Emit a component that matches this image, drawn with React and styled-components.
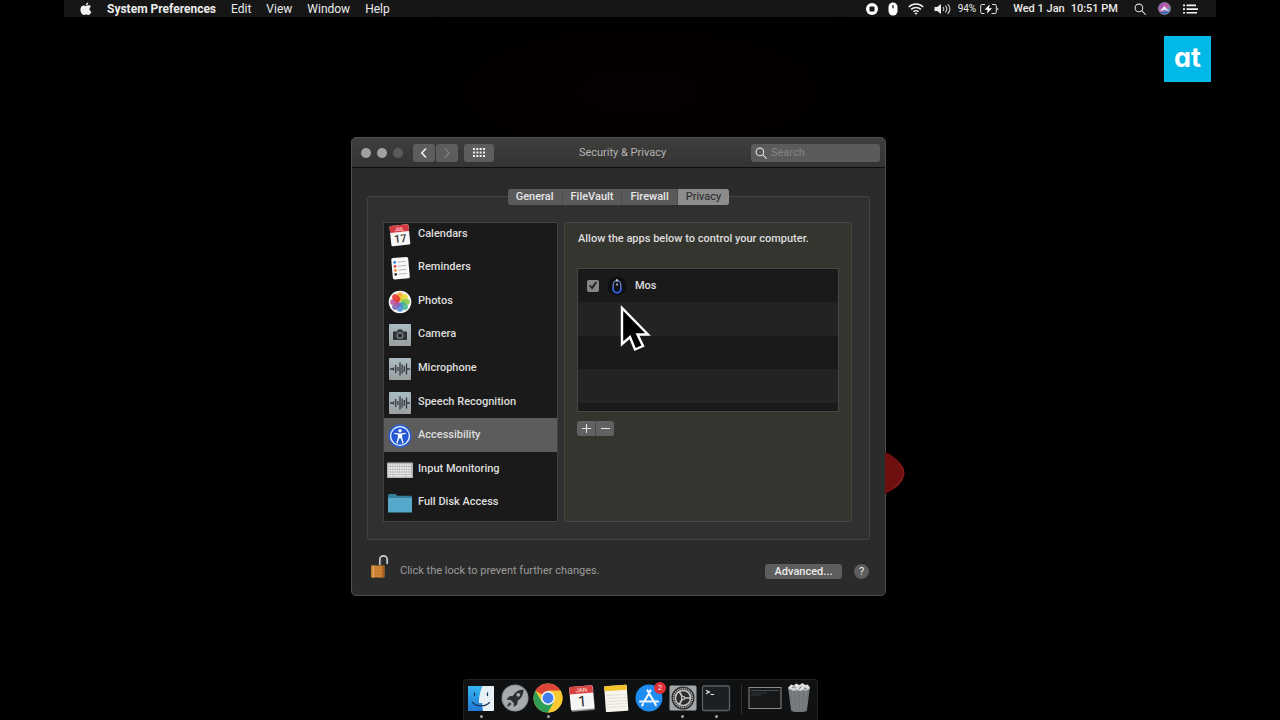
import * as React from "react";
import styled, { createGlobalStyle } from "styled-components";

const GlobalStyle = createGlobalStyle`
  * {
    box-sizing: border-box;
  }

  body {
    margin: 0;
    background: #000;
    font-family: Roboto, "Liberation Sans", sans-serif;
    font-size: 11px;
    line-height: 16px;
    color: #dedede;
  }

  button, input {
    font: inherit;
    color: inherit;
    padding: 0;
    border: none;
    margin: 0;
  }

  ul {
    margin: 0;
    padding: 0;
    list-style-type: none;
  }

  svg {
    display: block;
    flex: none;
  }
`;

/* ---------- menu bar icons ---------- */

const AppleIcon = () => (
  <svg width="12" height="14" viewBox="0 0 12 14" fill="#f2f2f2">
    <path d="M8.3.4c.1 1.5-1.1 2.8-2.4 2.8C5.700 1.800 6.900.6 8.300.4z" />
    <path d="M6 4c.6 0 1.300-.7 2.500-.7 1 0 2 .5 2.500 1.300-2.200 1.300-1.800 4.300.4 5.200-.6 1.700-1.700 3.300-2.900 3.300-.9 0-1.300-.5-2.400-.5s-1.500.5-2.300.5C2.200 13.100.4 10.300.4 7.600c0-2.700 1.600-4.200 3.300-4.200C4.800 3.400 5.500 4 6 4z" />
  </svg>
);

const RecordIcon = () => (
  <svg width="12" height="14" viewBox="0 0 12 14">
    <circle cx="6" cy="7" r="6" fill="#fff" />
    <rect x="3.500" y="4.500" width="5" height="5" rx="1" fill="#161616" />
  </svg>
);

const MouseStatusIcon = () => (
  <svg width="10" height="14" viewBox="0 0 10 14">
    <rect x="0.500" y="0.500" width="9" height="13" rx="4.500" fill="#fff" />
    <rect x="4.300" y="3" width="1.400" height="3.500" rx="0.700" fill="#222" />
  </svg>
);

const WifiIcon = () => (
  <svg width="16" height="14" viewBox="0 0 16 14" fill="none" stroke="#eee" strokeWidth="1.500">
    <path d="M.8 5a10.200 10.200 0 0 1 14.400 0M3.100 7.400a7 7 0 0 1 9.800 0M5.400 9.700a3.700 3.700 0 0 1 5.200 0" />
    <path d="M8 12.800 6.400 11.200a2.300 2.300 0 0 1 3.200 0z" fill="#eee" stroke="none" />
  </svg>
);

const SpeakerIcon = () => (
  <svg width="18" height="14" viewBox="0 0 18 14" fill="none" stroke="#cfcfcf" strokeWidth="1.100">
    <path d="M.5 5h2.700L7 2v10L3.200 9H.5z" fill="#eee" stroke="none" />
    <path d="M9 5c1 1.200 1 2.800 0 4M11.300 3.600c1.800 2 1.800 4.800 0 6.800M13.700 2.200c2.600 2.900 2.600 6.700 0 9.600" />
  </svg>
);

const BatteryIcon = () => (
  <svg width="19" height="14" viewBox="0 0 19 14" fill="none" stroke="#dcdcdc">
    <path d="M5 2.500H2A1.300 1.300 0 0 0 .7 3.800v6.400A1.300 1.300 0 0 0 2 11.500h2.500M12 2.500h3a1.300 1.300 0 0 1 1.300 1.300v6.400a1.300 1.300 0 0 1-1.300 1.300h-3.500" />
    <path d="M17.300 5.500c1.500.6 1.500 2.400 0 3z" fill="#dcdcdc" stroke="none" />
    <path d="M9.800 2.300 4.600 7.800h3.200l-1 4 5.200-5.600H8.900z" fill="#fff" stroke="none" />
  </svg>
);

const SearchIcon = ({ size = 12, color = "#d8d8d8" }) => (
  <svg width={size} height={size} viewBox="0 0 12 12" fill="none" stroke={color} strokeWidth="1.100">
    <circle cx="4.900" cy="4.900" r="3.800" />
    <path d="m7.700 7.700 3.600 3.600" strokeLinecap="round" />
  </svg>
);

const SiriIcon = () => (
  <svg width="13" height="13" viewBox="0 0 13 13">
    <defs>
      <linearGradient id="siri" x1="0" y1="0" x2="1" y2="1">
        <stop offset="0" stopColor="#7b4fd0" />
        <stop offset="0.450" stopColor="#c65a9c" />
        <stop offset="1" stopColor="#1fb2d8" />
      </linearGradient>
    </defs>
    <circle cx="6.500" cy="6.500" r="6" fill="url(#siri)" stroke="#8c8c9c" strokeWidth="0.800" />
    <path d="M1.500 8.500c2-.7 3.500-2.700 4.800-4.500 1.200 1.800 2.800 3.800 5.200 4.200-2 .5-3 .3-4.700-.7-1.800 1-3.300 1.400-5.300 1z" fill="#eaf3ff" />
    <path d="M2 9.500c3 .8 6 .8 9 0-2 3-7 3-9 0z" fill="#2a62c8" />
  </svg>
);

const MenuListIcon = () => (
  <svg width="15" height="14" viewBox="0 0 15 14" fill="#f2f2f2">
    <path d="M0 2.500h2v1.700H0zM0 6.200h2v1.700H0zM0 9.900h2v1.700H0zM3.500 2.500H13v1.700H3.500zM3.500 6.200H15v1.700H3.500zM3.500 9.900H14v1.700H3.500z" />
  </svg>
);

/* ---------- sidebar icons ---------- */

const CalendarIcon = () => (
  <svg width="26" height="26" viewBox="0 0 26 26">
    <g transform="rotate(-6 13 14)">
      <rect x="3.500" y="3" width="19" height="20.500" rx="1.500" fill="#f7f7f7" />
      <path d="M3.500 10V4.500A1.500 1.500 0 0 1 5 3h16a1.500 1.500 0 0 1 1.500 1.500V10z" fill="#d63a41" />
      <text x="13" y="8.800" fontSize="5" fontWeight="700" fill="#ffd9d9" textAnchor="middle">JUL</text>
      <text x="13" y="20.500" fontSize="11" fill="#333" textAnchor="middle">17</text>
    </g>
  </svg>
);

const RemindersIcon = () => (
  <svg width="26" height="26" viewBox="0 0 26 26">
    <g transform="rotate(-5 13 13)">
      <rect x="5" y="2.500" width="17" height="21.500" rx="1.800" fill="#f8f8f8" />
      <path d="M11 7h8.500M11 11h8.500M11 15h8.500M11 19h8.500" stroke="#a9a9ae" strokeWidth="0.800" />
      <circle cx="8.200" cy="7" r="1.400" fill="#2383d8" />
      <circle cx="8.200" cy="11" r="1.400" fill="#d13b3b" />
      <circle cx="8.200" cy="15" r="1.400" fill="#e58a2e" />
      <circle cx="8.200" cy="19" r="1.400" fill="#33272c" />
    </g>
  </svg>
);

const petals = ["#f5a52c", "#e8dc3a", "#8ccb49", "#48b58d", "#4a8fd8", "#7d67b8", "#c2589c", "#e5392f"];

const PhotosIcon = () => (
  <svg width="26" height="26" viewBox="0 0 26 26">
    <circle cx="13" cy="13" r="11.300" fill="#f4f4f4" />
    {petals.map((color, i) => (
      <rect
        key={color}
        x="10"
        y="3.200"
        width="6"
        height="9"
        rx="3"
        fill={color}
        opacity="0.900"
        transform={`rotate(${i * 45} 13 13)`}
      />
    ))}
  </svg>
);

const CameraIcon = () => (
  <svg width="26" height="26" viewBox="0 0 26 26">
    <defs>
      <linearGradient id="tile" x1="0" y1="0" x2="0" y2="1">
        <stop offset="0" stopColor="#a9bcc3" />
        <stop offset="1" stopColor="#9b9fa0" />
      </linearGradient>
    </defs>
    <rect x="2" y="2" width="22" height="22" rx="1" fill="url(#tile)" />
    <path d="M6.500 9.500H10l1-2h4l1 2h3.500a.5.5 0 0 1 .5.500v7.500a.5.5 0 0 1-.5.500h-13a.5.5 0 0 1-.5-.5V10a.5.5 0 0 1 .5-.5z" fill="#2d3338" />
    <circle cx="13" cy="13.500" r="3.300" fill="#4a5157" stroke="#8f989d" strokeWidth="0.800" />
    <circle cx="13" cy="13.500" r="1.500" fill="#23282c" />
  </svg>
);

const WaveIcon = () => (
  <svg width="26" height="26" viewBox="0 0 26 26">
    <rect x="2" y="2" width="22" height="22" rx="1" fill="url(#tile)" />
    <path
      d="M3 13h3M20 13h3M6.500 11.500v3M8.700 9v8M10.900 11v4M13 6.500v13M15.100 8.500v9M17.300 10v6M19.500 7.500v11"
      stroke="#343b40"
      strokeWidth="1.300"
    />
  </svg>
);

const AccessibilityIcon = () => (
  <svg width="26" height="26" viewBox="0 0 26 26">
    <circle cx="13" cy="13" r="11.500" fill="#2c5ed2" />
    <circle cx="13" cy="13" r="9.400" fill="#2459d6" stroke="#f2f5ff" strokeWidth="1.300" />
    <circle cx="13" cy="7.700" r="1.700" fill="#fff" />
    <path
      d="m7.800 10.300 3.700.9v3.600L10 20M18.200 10.300l-3.700.9v3.600L16 20"
      fill="none"
      stroke="#fff"
      strokeWidth="1.300"
      strokeLinecap="round"
    />
    <path d="M11 10.500h4v5h-4z" fill="#fff" />
  </svg>
);

const KeyboardIcon = () => (
  <svg width="26" height="26" viewBox="0 0 26 26">
    <rect x="0" y="5.500" width="26" height="15.500" rx="1" fill="#b9b9b9" />
    <path
      d="M1.500 8h23M1.500 10.800h23M1.500 13.600h23M1.500 16.400h23"
      stroke="#efefef"
      strokeWidth="1.700"
      strokeDasharray="1.700 0.600"
    />
    <path d="M1.500 18.900h5M7.500 18.900h11M19.500 18.900h5" stroke="#efefef" strokeWidth="1.400" />
  </svg>
);

const FolderIcon = () => (
  <svg width="26" height="26" viewBox="0 0 26 26">
    <path d="M1 5.500A1.500 1.500 0 0 1 2.500 4h6l1.700 1.800h13.300A1.500 1.500 0 0 1 25 7.300V9H1z" fill="#377f9c" />
    <path d="M1 8h24v13.500a1 1 0 0 1-1 1H2a1 1 0 0 1-1-1z" fill="#56a9cb" />
  </svg>
);

/* ---------- window icons ---------- */

const MosIcon = () => (
  <svg width="20" height="20" viewBox="0 0 20 20">
    <circle cx="10" cy="10" r="9.500" fill="#0d0f14" />
    <rect x="6.200" y="4.700" width="7.600" height="12" rx="3.800" fill="#10131c" stroke="#6f8fd6" strokeWidth="1.200" />
    <path d="M6.200 11.500v1.400a3.800 3.800 0 0 0 7.600 0v-1.400" fill="none" stroke="#2f63e6" strokeWidth="1.600" />
    <path d="M10 3v2.500M10 7.500v2" stroke="#e6e6e6" strokeWidth="1.300" />
  </svg>
);

const LockIcon = () => (
  <svg width="20" height="26" viewBox="0 0 20 26">
    <path d="M10.800 12V6.500a3.700 3.700 0 0 1 7.400 0V11" fill="none" stroke="#c9d0d6" strokeWidth="1.700" />
    <path d="M12 12V7" stroke="#5e666c" strokeWidth="0.800" />
    <rect x="2" y="12.500" width="13.500" height="12" rx="0.500" fill="#cd8535" />
    <path d="M2 15h13.500M2 18h13.500M2 21h13.500" stroke="#bd7429" strokeWidth="0.800" />
    <path d="M4.500 12.500v12" stroke="#e6a65a" strokeWidth="1.500" />
    <path d="M14 12.500v12" stroke="#9c5a1e" strokeWidth="1.500" />
  </svg>
);

/* ---------- dock icons ---------- */

const FinderIcon = () => (
  <svg width="28" height="28" viewBox="0 0 28 28">
    <defs>
      <linearGradient id="finder" x1="0" y1="0" x2="0" y2="1">
        <stop offset="0" stopColor="#35b4f3" />
        <stop offset="1" stopColor="#2378d4" />
      </linearGradient>
    </defs>
    <rect x="1" y="2" width="26" height="25" rx="1" fill="#e9f1f8" />
    <path d="M15.500 2H2a1 1 0 0 0-1 1v23a1 1 0 0 0 1 1h14c-.6-2.500-.8-5-.8-8h-3.400C12 12 13.500 6 15.500 2z" fill="url(#finder)" />
    <path d="M7.500 9v2.500M20.500 9v2.500" stroke="#12375a" strokeWidth="1.300" strokeLinecap="round" />
    <path d="M5.500 18.500c4.500 4.500 12.500 4.500 17 0" fill="none" stroke="#12375a" strokeWidth="1.200" strokeLinecap="round" />
  </svg>
);

const LaunchpadIcon = () => (
  <svg width="28" height="28" viewBox="0 0 28 28">
    <circle cx="14" cy="14" r="13.500" fill="#8e9599" />
    <circle cx="14" cy="14" r="12.300" fill="#a5abae" />
    <path d="M22.500 5.500c-5 .2-8.300 2.600-10.500 6.300l-4 .7-2.500 3.300 4 .1 3.200 3.200.1 4 3.400-2.600.6-4c3.500-2 5.700-6 5.700-11z" fill="#2b2f33" />
    <circle cx="17.300" cy="10.800" r="1.900" fill="#a5abae" />
    <path d="M9 18.200c-2 .5-2.500 2.500-3 4.600 2-.4 4-1 4.500-3z" fill="#3d4246" />
  </svg>
);

const ChromeIcon = () => (
  <svg width="30" height="30" viewBox="0 0 30 30">
    <circle cx="15" cy="15" r="14.500" fill="#f8c930" />
    <path d="M15 15 2.440 7.750A14.500 14.500 0 0 1 27.560 7.750H15z" fill="#dc4537" />
    <path d="M2.440 7.750A14.500 14.500 0 0 0 15 29.500l6.300-10.900L15 15 8.700 18.600z" fill="#2f9e57" />
    <path d="M27.560 7.750H15l6.300 10.900L15 29.500A14.500 14.500 0 0 0 27.560 7.750z" fill="#f8c930" />
    <circle cx="15" cy="15" r="6.900" fill="#f4f4f4" />
    <circle cx="15" cy="15" r="5.400" fill="#3f7ee8" />
  </svg>
);

const DockCalendarIcon = () => (
  <svg width="28" height="28" viewBox="0 0 28 28">
    <g transform="rotate(-5 14 14)">
      <rect x="2.500" y="3" width="23.500" height="24" rx="1.500" fill="#8d8d8d" />
      <rect x="2" y="2" width="23.500" height="23.500" rx="1.500" fill="#f5f5f5" />
      <path d="M2 9.500v-6A1.500 1.500 0 0 1 3.500 2H24a1.500 1.500 0 0 1 1.500 1.500v6z" fill="#d8413f" />
      <text x="14" y="8" fontSize="6" fill="#ffe4e1" textAnchor="middle">JAN</text>
      <text x="14" y="22.500" fontSize="15" fill="#222" textAnchor="middle">1</text>
    </g>
  </svg>
);

const NotesIcon = () => (
  <svg width="28" height="28" viewBox="0 0 28 28">
    <g transform="rotate(-4 14 14)">
      <rect x="3" y="1.500" width="22.500" height="26" rx="1" fill="#f6f4ec" />
      <path d="M3 6.500v-4a1 1 0 0 1 1-1h20.500a1 1 0 0 1 1 1v4z" fill="#f2c32e" />
      <path d="M4 11h20.500M4 14h20.500M4 17h20.500M4 20h20.500M4 23h20.500" stroke="#dad8d2" strokeWidth="0.700" />
    </g>
  </svg>
);

const AppStoreIcon = () => (
  <svg width="28" height="28" viewBox="0 0 28 28">
    <circle cx="14" cy="14" r="13.500" fill="#1f8cf0" />
    <path
      d="M15.500 6.500 9.300 17.500M8 20l-.8 1.300M12.500 6.500l8.300 14.500M5 17.500h11.500M19.300 17.500H23"
      fill="none"
      stroke="#eef6ff"
      strokeWidth="2.200"
      strokeLinecap="round"
    />
  </svg>
);

const SettingsIcon = () => (
  <svg width="28" height="28" viewBox="0 0 28 28">
    <rect x="0.500" y="1.500" width="27" height="25" rx="1.500" fill="#a3a7aa" />
    <circle cx="14" cy="14" r="11.500" fill="#2d2e30" />
    <circle cx="14" cy="14" r="9.400" fill="none" stroke="#a9a9a9" strokeWidth="1.600" strokeDasharray="1.200 0.760" />
    <circle cx="14" cy="14" r="7.600" fill="#2b2b2b" stroke="#c4c4c4" strokeWidth="1.500" />
    <path d="M14 14h7.500M14 14l-3.800-6.500M14 14l-3.800 6.500" stroke="#c4c4c4" strokeWidth="1.700" />
    <circle cx="14" cy="14" r="2.200" fill="#c4c4c4" />
    <circle cx="14" cy="14" r="1" fill="#333" />
  </svg>
);

const TerminalIcon = () => (
  <svg width="30" height="28" viewBox="0 0 30 28">
    <rect x="1.500" y="2" width="27" height="24.500" rx="1.500" fill="#1d2022" stroke="#5c5f61" strokeWidth="1.300" />
    <path d="m5 6.300 3.300 1.700L5 9.700M9.500 10.500H13" fill="none" stroke="#e8e8e8" strokeWidth="1.200" />
  </svg>
);

const MinimisedIcon = () => (
  <svg width="34" height="28" viewBox="0 0 34 28">
    <rect x="1" y="3.500" width="32" height="21" fill="#16181a" stroke="#8a8a8a" />
    <path d="M3 6.500h28" stroke="#4d5052" />
    <path d="M3 9h16M3 11h10" stroke="#3b3d3f" strokeWidth="0.800" />
  </svg>
);

const TrashIcon = () => (
  <svg width="26" height="30" viewBox="0 0 26 30">
    <path d="M2 4h22l-3 23c-.2 1.500-1.500 2-8 2s-7.800-.5-8-2z" fill="#737678" />
    <path d="M6 8l2 19M10.500 8l.8 20M15.500 8l-.8 20M20 8l-2 19" stroke="#7f8284" strokeWidth="1.200" />
    <path d="m2 5 3-3.500 3 1 2-2 3.500 1.500 3-2 2.500 2 3-.5L24 5l-3.500 2.500-3-1-3 1.500L11 6.500 7.500 8z" fill="#dedede" />
    <path d="m6 5 2-1.500 2 1.800M13 5.500l2.500-2M18 5l2.500.5" stroke="#666" fill="none" />
    <path d="M2 5c1 3 21 3 22 0" fill="none" stroke="#b5b5b5" strokeWidth="0.800" />
  </svg>
);

/* ---------- data ---------- */

const menus = ["Edit", "View", "Window", "Help"];

const tabs = ["General", "FileVault", "Firewall", "Privacy"];

const categories = [
  { name: "Calendars", Icon: CalendarIcon },
  { name: "Reminders", Icon: RemindersIcon },
  { name: "Photos", Icon: PhotosIcon },
  { name: "Camera", Icon: CameraIcon },
  { name: "Microphone", Icon: WaveIcon },
  { name: "Speech Recognition", Icon: WaveIcon },
  { name: "Accessibility", Icon: AccessibilityIcon },
  { name: "Input Monitoring", Icon: KeyboardIcon },
  { name: "Full Disk Access", Icon: FolderIcon },
];

const dockApps = [
  { name: "Finder", Icon: FinderIcon, running: true },
  { name: "Launchpad", Icon: LaunchpadIcon },
  { name: "Chrome", Icon: ChromeIcon, running: true },
  { name: "Calendar", Icon: DockCalendarIcon },
  { name: "Notes", Icon: NotesIcon },
  { name: "App Store", Icon: AppStoreIcon, badge: 2 },
  { name: "System Preferences", Icon: SettingsIcon, running: true },
  { name: "Terminal", Icon: TerminalIcon, running: true },
];

const App = () => {
  const [tab, setTab] = React.useState("Privacy");
  const [category, setCategory] = React.useState("Accessibility");

  return (
    <Desktop>
      <GlobalStyle />
      <MenuBar>
        <MenuGroup>
          <MenuButton aria-label="Apple"><AppleIcon /></MenuButton>
          <MenuButton $strong>System Preferences</MenuButton>
          {menus.map((name) => (
            <MenuButton key={name}>{name}</MenuButton>
          ))}
        </MenuGroup>
        <StatusGroup>
          <StatusIcons>
            <RecordIcon />
            <MouseStatusIcon />
            <WifiIcon />
            <SpeakerIcon />
          </StatusIcons>
          <Battery>
            94% <BatteryIcon />
          </Battery>
          <Clock>
            <span>Wed 1 Jan</span>
            <span>10:51 PM</span>
          </Clock>
          <StatusTools>
            <SearchIcon />
            <SiriIcon />
            <MenuListIcon />
          </StatusTools>
        </StatusGroup>
      </MenuBar>
      <Watermark>at</Watermark>

      <Window>
        <Petal viewBox="0 0 24 46">
          <path d="M0 1c6 2 13 7 17 14 3 4 3 7 2 10-2 7-10 14-19 18z" fill="#6e1010" />
          <path d="M15 13c4 5 4 8 3 12-1 4-5 9-9 12" fill="none" stroke="#861a18" strokeWidth="1.500" />
        </Petal>
        <TitleBar>
          <Lights>
            <Light />
            <Light />
            <Light $dim />
          </Lights>
          <NavButtons>
            <ToolButton aria-label="Back">
              <svg width="8" height="12" viewBox="0 0 8 12" fill="none" stroke="#f0f0f0" strokeWidth="1.600">
                <path d="M6 1.500 1.800 6 6 10.500" />
              </svg>
            </ToolButton>
            <ToolButton aria-label="Forward">
              <svg width="8" height="12" viewBox="0 0 8 12" fill="none" stroke="#7d7d7d" strokeWidth="1.400">
                <path d="M2 1.500 6.200 6 2 10.500" />
              </svg>
            </ToolButton>
          </NavButtons>
          <ToolButton $wide aria-label="Show all">
            <svg width="12" height="9" viewBox="0 0 12 9" fill="none" stroke="#eee" strokeWidth="2">
              <path d="M0 1h12M0 4.500h12M0 8h12" strokeDasharray="2 1.330" />
            </svg>
          </ToolButton>
          <Title>Security &amp; Privacy</Title>
          <SearchField>
            <SearchIcon color="#dcdcdc" />
            <input type="search" placeholder="Search" aria-label="Search" />
          </SearchField>
        </TitleBar>

        <Content>
          <Tabs role="tablist">
            {tabs.map((name) => (
              <Tab key={name} role="tab" aria-selected={name === tab} $active={name === tab} onClick={() => setTab(name)}>
                {name}
              </Tab>
            ))}
          </Tabs>
          <Group>
            <Sidebar>
              <SidebarList>
                {categories.map(({ name, Icon }) => (
                  <li key={name}>
                    <SidebarItem $active={name === category} onClick={() => setCategory(name)}>
                      <Icon />
                      <span>{name}</span>
                    </SidebarItem>
                  </li>
                ))}
              </SidebarList>
            </Sidebar>
            <Panel>
              <p>Allow the apps below to control your computer.</p>
              <AppList>
                <AppRow>
                  <Checkbox type="checkbox" id="app-mos" defaultChecked />
                  <MosIcon />
                  <label htmlFor="app-mos">Mos</label>
                </AppRow>
                <AppRow />
                <AppRow />
                <AppRow />
              </AppList>
              <AddRemove>
                <SmallButton aria-label="Add">
                  <svg width="9" height="9" viewBox="0 0 9 9" stroke="#e2e2e2"><path d="M0 4.500h9M4.500 0v9" /></svg>
                </SmallButton>
                <SmallButton aria-label="Remove">
                  <svg width="9" height="9" viewBox="0 0 9 9" stroke="#e2e2e2"><path d="M0 4.500h9" /></svg>
                </SmallButton>
              </AddRemove>
              <Pointer viewBox="0 0 32 48">
                <path
                  d="M3 3v36l8-7L16 44.500l8-3.500-5.500-11.500H29z"
                  fill="#000"
                  stroke="#fff"
                  strokeWidth="2.400"
                />
              </Pointer>
            </Panel>
          </Group>
        </Content>

        <Footer>
          <LockButton aria-label="Lock"><LockIcon /></LockButton>
          <span>Click the lock to prevent further changes.</span>
          <AdvancedButton>Advanced...</AdvancedButton>
          <HelpButton>?</HelpButton>
        </Footer>
      </Window>

      <Dock>
        {dockApps.map(({ name, Icon, running, badge }) => (
          <DockItem key={name} aria-label={name} $running={running}>
            <Icon />
            {badge && <Badge>{badge}</Badge>}
          </DockItem>
        ))}
        <DockDivider />
        <DockItem aria-label="Minimised window"><MinimisedIcon /></DockItem>
        <DockItem aria-label="Trash"><TrashIcon /></DockItem>
      </Dock>
    </Desktop>
  );
};

const Desktop = styled.main`
  position: relative;
  display: flex;
  flex-direction: column;
  min-height: 100vh;
  overflow: hidden;
  background: radial-gradient(ellipse 360px 120px at 50% 90px, #060000, #000);
`;

const MenuBar = styled.header`
  display: flex;
  justify-content: space-between;
  align-items: center;
  height: 17px;
  margin: 0 5%;
  padding: 0 18px 0 16px;
  background: #161616;
  color: #ececec;
`;

const MenuGroup = styled.nav`
  display: flex;
  align-items: center;
  gap: 15px;
  font-size: 12px;
`;

const MenuButton = styled.button`
  background: none;
  font-weight: ${(props) => (props.$strong ? 700 : 400)};
`;

const StatusGroup = styled.div`
  display: flex;
  align-items: center;
  gap: 14px;
`;

const StatusIcons = styled.div`
  display: flex;
  align-items: center;
  gap: 10px;
  margin-right: -8px;
`;

const Battery = styled.span`
  display: flex;
  align-items: center;
  gap: 4px;
  font-size: 10px;
`;

const Clock = styled.time`
  display: flex;
  gap: 6px;
  font-weight: 500;
`;

const StatusTools = styled.div`
  display: flex;
  align-items: center;
  gap: 12px;
  margin-left: 2px;
`;

const Watermark = styled.div`
  position: absolute;
  top: 36px;
  right: calc(5% + 5px);
  width: 47px;
  height: 46px;
  background: #00b9e8;
  color: #fff;
  font-family: Inter, sans-serif;
  font-size: 27px;
  line-height: 44px;
  font-weight: 700;
  font-feature-settings: "cv11";
  text-align: center;
`;

const Window = styled.section`
  position: relative;
  width: 535px;
  margin: 120px 0 83px calc(50% - 289px);
  background: #2b2b2b;
  border: 1px solid #4e4e4e;
  border-radius: 5px;
`;

const Petal = styled.svg`
  position: absolute;
  left: 100%;
  top: 313px;
  width: 24px;
  height: 46px;
`;

const TitleBar = styled.header`
  display: flex;
  align-items: center;
  height: 30px;
  padding: 0 5px 0 9px;
  border-bottom: 1px solid #0c0c0c;
  border-radius: 4px 4px 0 0;
  background: linear-gradient(#3e3e3c, #343434);
`;

const Lights = styled.div`
  display: flex;
  gap: 6px;
  margin-right: 10px;
`;

const Light = styled.span`
  width: 10px;
  height: 10px;
  border-radius: 50%;
  background: ${(props) => (props.$dim ? "#5a5a5a" : "#a2a2a2")};
`;

const NavButtons = styled.div`
  display: flex;
  gap: 1px;
  margin-right: 6px;
`;

const ToolButton = styled.button`
  display: flex;
  align-items: center;
  justify-content: center;
  width: ${(props) => (props.$wide ? "30px" : "22px")};
  height: 18px;
  border-radius: 3px;
  background: #5d5d5d;
`;

const Title = styled.h1`
  flex: 1;
  margin: 0;
  font-size: 11px;
  font-weight: 400;
  text-align: center;
  color: #b4b4b4;
`;

const SearchField = styled.div`
  display: flex;
  align-items: center;
  gap: 4px;
  width: 129px;
  height: 18px;
  padding: 0 4px;
  border-radius: 3px;
  background: #5b5b5b;

  input {
    flex: 1;
    min-width: 0;
    background: transparent;
    outline: none;
  }

  input::placeholder {
    color: #858585;
    opacity: 1;
  }
`;

const Content = styled.div`
  display: flex;
  flex-direction: column;
  padding: 21px 15px 0;
`;

const Tabs = styled.div`
  position: relative;
  display: flex;
  align-self: center;
  height: 16px;
  margin-bottom: -9px;
  border-radius: 3px;
  overflow: hidden;
  background: #5a5a5a;
`;

const Tab = styled.button`
  padding: 0 8px;
  border-left: 1px solid #4c4c4c;
  background: ${(props) => (props.$active ? "#8c8c8c" : "#5a5a5a")};
  color: ${(props) => (props.$active ? "#262626" : "#e6e6e6")};
  font-weight: ${(props) => (props.$active ? 400 : 500)};

  &:first-child {
    border-left: none;
  }
`;

const Group = styled.div`
  display: flex;
  gap: 6px;
  height: 344px;
  padding: 25px 17px 17px 15px;
  border: 1px solid #434343;
  border-radius: 3px;
  background: #303030;
`;

const Sidebar = styled.div`
  flex: 0 0 175px;
  overflow: hidden;
  border: 1px solid #434340;
  background: #1a1a1a;
`;

const SidebarList = styled.ul`
  display: grid;
  grid-auto-rows: 1fr;
  height: 302px;
  margin-top: -6px;
`;

const SidebarItem = styled.button`
  display: flex;
  align-items: center;
  gap: 5px;
  width: 100%;
  height: 100%;
  padding: 0 3px;
  text-align: left;
  font-weight: 500;
  background: ${(props) => (props.$active ? "#5c5c5c" : "transparent")};

  svg {
    margin-top: 2px;
  }
`;

const Panel = styled.div`
  position: relative;
  flex: 1;
  padding: 8px 12px;
  border: 1px solid #474742;
  border-radius: 2px;
  background: #353530;

  p {
    margin: 0 0 21px 1px;
    font-weight: 500;
  }
`;

const AppList = styled.ul`
  height: 144px;
  overflow: hidden;
  border: 1px solid #484844;
  background: #1a1a1a;
`;

const AppRow = styled.li`
  display: flex;
  align-items: center;
  height: 33px;
  padding-left: 9px;
  gap: 8px;
  font-weight: 500;

  &:nth-child(even) {
    height: 34px;
    background: #232323;
  }
`;

const Checkbox = styled.input`
  appearance: none;
  display: grid;
  place-items: center;
  width: 12px;
  height: 12px;
  border-radius: 2px;
  background: #868686;

  &:checked::before {
    content: "";
    width: 8px;
    height: 8px;
    background: #1c1c1c;
    clip-path: polygon(0 52%, 16% 40%, 36% 66%, 82% 0, 100% 12%, 40% 100%);
  }
`;

const AddRemove = styled.div`
  display: flex;
  gap: 1px;
  width: 37px;
  margin-top: 9px;
  border-radius: 3px;
  overflow: hidden;
  background: #474747;
`;

const SmallButton = styled.button`
  display: flex;
  flex: 1;
  align-items: center;
  justify-content: center;
  height: 15px;
  background: #616161;
`;

const Pointer = styled.svg`
  position: absolute;
  left: 54px;
  top: 82px;
  width: 32px;
  height: 48px;
`;

const Footer = styled.footer`
  display: flex;
  align-items: center;
  height: 55px;
  padding: 7px 16px 0 17px;
  color: #9a9a9a;
`;

const LockButton = styled.button`
  margin: 0 11px 10px 0;
  background: none;
`;

const AdvancedButton = styled.button`
  width: 77px;
  height: 15px;
  line-height: 15px;
  margin-left: auto;
  border-radius: 3px;
  background: #5d5d5d;
  color: #ececec;
  font-weight: 500;
`;

const HelpButton = styled.button`
  width: 15px;
  height: 15px;
  line-height: 15px;
  margin-left: 12px;
  border-radius: 50%;
  background: #5d5d5d;
  color: #ececec;
`;

const Dock = styled.footer`
  display: flex;
  align-self: center;
  width: 355px;
  height: 41px;
  margin-top: auto;
  padding: 0 1px;
  border: 1px solid #222;
  border-bottom: none;
  border-radius: 4px 4px 0 0;
  background: #101112;
`;

const DockItem = styled.button`
  position: relative;
  display: flex;
  flex: 1 1 0;
  align-items: center;
  justify-content: center;
  min-width: 0;
  height: 36px;
  background: none;

  &::after {
    content: "";
    display: ${(props) => (props.$running ? "block" : "none")};
    position: absolute;
    bottom: -2px;
    width: 3px;
    height: 3px;
    border-radius: 50%;
    background: #a6a6a6;
  }
`;

const Badge = styled.span`
  position: absolute;
  top: 2px;
  right: 0;
  width: 12px;
  height: 12px;
  border-radius: 50%;
  background: #dc2f38;
  color: #ffe3e3;
  font-size: 8px;
  line-height: 12px;
`;

const DockDivider = styled.span`
  width: 1px;
  height: 30px;
  margin: 4px 6px 0 8px;
  background: #303030;
`;

export default App;
